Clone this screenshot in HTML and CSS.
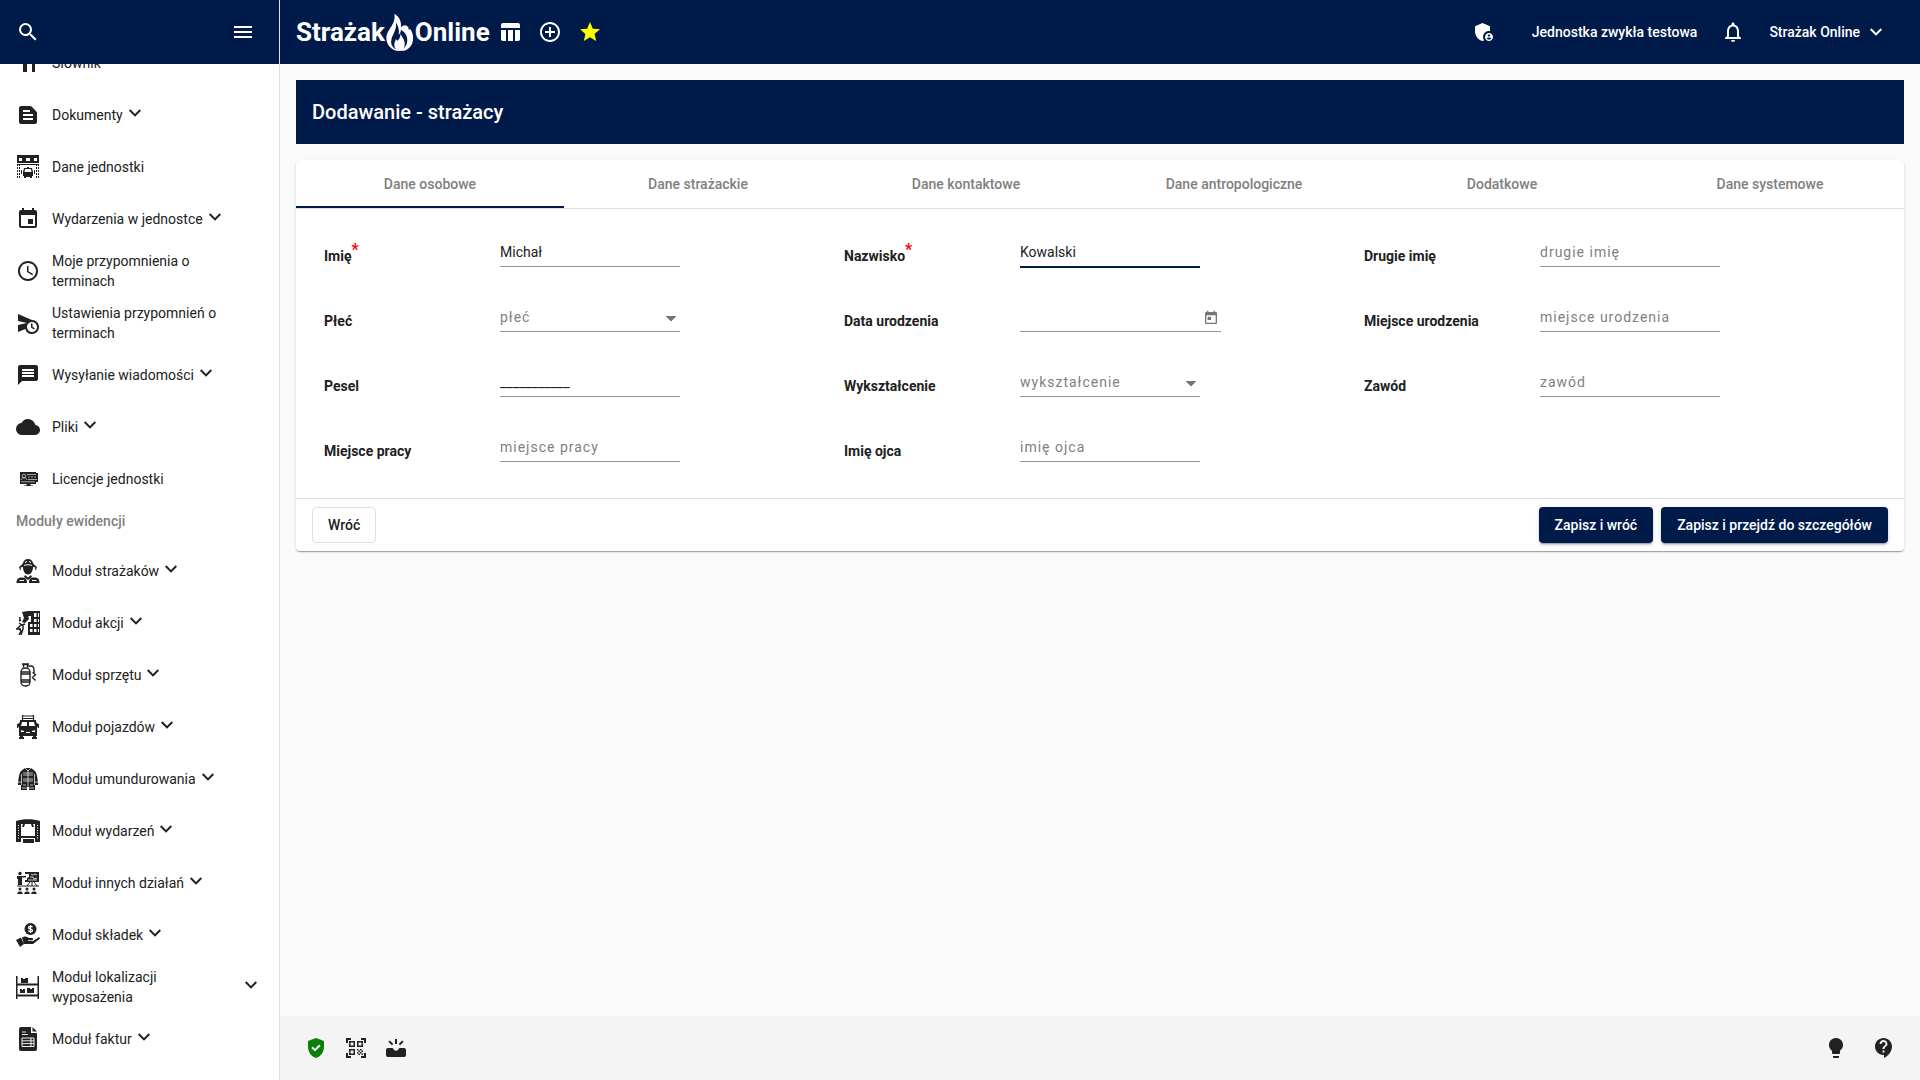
FILE: index.html
```html
<!DOCTYPE html>
<html lang="pl">
<head>
    <meta charset="UTF-8">
    <meta name="viewport" content="width=device-width, initial-scale=1.0">
    <title>Strażak Online - Dodawanie strażaka</title>
    <link rel="stylesheet" href="styles.css">
</head>
<body>
    <!-- Wspólna ikona strzałki -->
    <svg class="sprite" aria-hidden="true">
        <symbol id="chevron" viewBox="0 0 24 24"><path d="M7.4 8.3 12 12.9l4.6-4.6L18 9.7l-6 6-6-6z"/></symbol>
    </svg>

    <!-- Menu boczne -->
    <aside class="sidebar">
        <div class="sidebar-top">
            <button class="icon-btn" aria-label="Szukaj"><svg class="icon" viewBox="0 0 24 24"><path d="M15.5 14h-.79l-.28-.27A6.471 6.471 0 0 0 16 9.5 6.5 6.5 0 1 0 9.5 16c1.61 0 3.09-.59 4.23-1.57l.27.28v.79l5 4.99L20.49 19l-4.99-5zm-6 0C7.01 14 5 11.99 5 9.5S7.01 5 9.5 5 14 7.01 14 9.5 11.99 14 9.5 14z"/></svg></button>
            <button class="icon-btn" aria-label="Menu"><svg class="icon" viewBox="0 0 24 24"><path d="M3 18h18v-2H3v2zm0-5h18v-2H3v2zm0-7v2h18V6H3z"/></svg></button>
        </div>
        <nav class="nav">
            <ul class="nav-list nav-list-scrolled">
                <li><a href="#" class="nav-item">
                    <svg class="icon" viewBox="0 0 24 24"><path d="M5 4h14v3H5zM7 9c0-1 1-2 2-2h8c1 0 2 1 2 2v12h-3V11h-5v10H7z"/></svg>
                    <span>Słownik</span></a></li>
                <li><a href="#" class="nav-item">
                    <svg class="icon" viewBox="0 0 24 24"><path d="M20.41 8.41l-4.83-4.83c-.37-.37-.88-.58-1.41-.58H5c-1.1 0-2 .9-2 2v14c0 1.1.9 2 2 2h14c1.1 0 2-.9 2-2V9.83c0-.53-.21-1.04-.59-1.42zM7 7h7v2H7V7zm10 10H7v-2h10v2zm0-4H7v-2h10v2z"/></svg>
                    <span>Dokumenty</span><svg class="icon chevron"><use href="#chevron"/></svg></a></li>
                <li><a href="#" class="nav-item">
                    <svg class="icon" viewBox="0 0 24 24"><path fill-rule="evenodd" d="M1 0h22v8H1zM3 3v3h3V3zm7 0v3h4V3zm8 0v3h3V3z"/><path d="M1 9h22v1H1z"/><path fill-rule="evenodd" d="M8 13h3v-1h2v1h3l1 4v4h-1v2h-2v-1h-4v1H8v-2H7v-4zm1 1-.5 3h7l-.5-3zM5 15h1v4H5zm13 0h1v4h-1z"/><path fill="none" stroke="currentColor" stroke-dasharray="2 1" d="M1.5 9v15M3.5 9v15M20.5 9v15M22.5 9v15"/></svg>
                    <span>Dane jednostki</span></a></li>
                <li><a href="#" class="nav-item">
                    <svg class="icon" viewBox="0 0 24 24"><path d="M17 12h-5v5h5v-5zM16 1v2H8V1H6v2H5c-1.11 0-1.99.9-1.99 2L3 19a2 2 0 0 0 2 2h14c1.1 0 2-.9 2-2V5c0-1.1-.9-2-2-2h-1V1h-2zm3 18H5V8h14v11z"/></svg>
                    <span>Wydarzenia w jednostce</span><svg class="icon chevron"><use href="#chevron"/></svg></a></li>
                <li><a href="#" class="nav-item">
                    <svg class="icon" viewBox="0 0 24 24"><path d="M11.99 2C6.47 2 2 6.48 2 12s4.47 10 9.99 10C17.52 22 22 17.52 22 12S17.52 2 11.99 2zM12 20c-4.42 0-8-3.58-8-8s3.58-8 8-8 8 3.58 8 8-3.58 8-8 8zm.5-13H11v6l5.25 3.15.75-1.23-4.5-2.67z"/></svg>
                    <span>Moje przypomnienia o terminach</span></a></li>
                <li><a href="#" class="nav-item">
                    <svg class="icon" viewBox="0 0 24 24"><path d="M16.5 12.5H15v4l3 2 .75-1.23-2.25-1.52zM16 9 2 3v7l9 2-9 2v7l7.27-3.11C10.09 20.83 12.79 23 16 23c3.86 0 7-3.14 7-7s-3.14-7-7-7zm0 12c-2.76 0-5-2.24-5-5s2.24-5 5-5 5 2.24 5 5-2.24 5-5 5z"/></svg>
                    <span>Ustawienia przypomnień o terminach</span></a></li>
                <li><a href="#" class="nav-item">
                    <svg class="icon" viewBox="0 0 24 24"><path d="M20 2H4c-1.1 0-1.99.9-1.99 2L2 22l4-4h14c1.1 0 2-.9 2-2V4c0-1.1-.9-2-2-2zm-2 12H6v-2h12v2zm0-3H6V9h12v2zm0-3H6V6h12v2z"/></svg>
                    <span>Wysyłanie wiadomości</span><svg class="icon chevron"><use href="#chevron"/></svg></a></li>
                <li><a href="#" class="nav-item">
                    <svg class="icon" viewBox="0 0 24 24"><path d="M19.35 10.04A7.49 7.49 0 0 0 12 4C9.11 4 6.6 5.64 5.35 8.04A5.994 5.994 0 0 0 0 14c0 3.31 2.69 6 6 6h13c2.76 0 5-2.24 5-5 0-2.64-2.05-4.78-4.65-4.96z"/></svg>
                    <span>Pliki</span><svg class="icon chevron"><use href="#chevron"/></svg></a></li>
                <li><a href="#" class="nav-item">
                    <svg class="icon" viewBox="0 0 24 24"><path d="M4 5h16v1h2v9h-2v2h-6l1 1.5h2V19H8v-.5h2l1-1.5H4z"/><g fill="none" stroke="#fff" stroke-width=".6"><circle cx="8" cy="9" r="1.8"/><path d="M5 13c1-3 5-3 6 0M11 7.5h9M12 10h2m1 0h2m1 0h2M5 14.8h14M12 12.5h9"/></g></svg>
                    <span>Licencje jednostki</span></a></li>
            </ul>
            <h2 class="nav-heading">Moduły ewidencji</h2>
            <ul class="nav-list">
                <li><a href="#" class="nav-item">
                    <svg class="icon" viewBox="0 0 24 24"><path d="M12 0c3 0 4.5 2 5 4l1 1.5 3 2.5-1 3h-1l.5-2.5L17 8c0 4-2 7.5-5 7.5S7 12 7 8l-2.500.5L5 11H4L3 8l3-2.500L7 4c.5-2 2-4 5-4z"/><path fill="none" stroke="#fff" d="M8 6.500c2-1 6-1 8 0M9.500 4l1-2M14.500 4l-1-2"/><path d="M9 16l3 2.500L15 16l1 2-4 3-4-3z"/><path fill-rule="evenodd" d="M.5 24c0-4 2-5.500 5-5.500 4 0 5.500 1.500 5.500 5.500zM3 22h5v-1H4zM13 24c0-4 1.500-5.500 5-5.500 4 0 5.500 1.500 5.500 5.500zm3-2h5l-1-1h-4z"/></svg>
                    <span>Moduł strażaków</span><svg class="icon chevron"><use href="#chevron"/></svg></a></li>
                <li><a href="#" class="nav-item">
                    <svg class="icon" viewBox="0 0 24 24"><path fill-rule="evenodd" d="M12 11h3V5h-3V0h12v24H12zm2 2v3h2.5v-3zm4 0v3h2.5v-3zm0-5v3h2.5V8zm0-6v4h2.5V2zm4 0v4h1V2zm0 6v3h1V8zm0 5v3h1v-3zm-8 5v3h2.5v-3zm4 0v3h2.5v-3zm4 0v3h1v-3z"/><path d="M6 1l6-1 3 3-3 1 1 4-4 4-3-1 2-4-1-3z"/><path fill="none" stroke="currentColor" stroke-width="1.5" d="M3 10l2-1M3 12l3 2 3-1M5 14l-3 3 3 3-2 4M7 13v5l-2 6M0 18h5M4 6v3"/></svg>
                    <span>Moduł akcji</span><svg class="icon chevron"><use href="#chevron"/></svg></a></li>
                <li><a href="#" class="nav-item">
                    <svg class="icon" viewBox="0 0 24 24"><g fill="none" stroke="currentColor" stroke-width="1.4"><rect x="5" y="5" width="9" height="18" rx="4"/><path d="M5 9h9M5 11h9M5 17h9M5 19h9M7.5 4.5v-3h4v3M6 1h7M12 3h3c2 0 3 2 3 4v3M16.5 9.5l3 2-3 3 3 3"/></g></svg>
                    <span>Moduł sprzętu</span><svg class="icon chevron"><use href="#chevron"/></svg></a></li>
                <li><a href="#" class="nav-item">
                    <svg class="icon" viewBox="0 0 24 24"><path fill="none" stroke="currentColor" stroke-width="1.2" d="M6.5 0v5M17.5 0v5M6.5 1h11M6.5 3.5h11"/><path fill-rule="evenodd" d="M4 5h16v2l2 2h1v4h-1l-1-2v10h-1v1h1v2h-5v-2h1v-1H7v1h1v2H3v-2h1v-1H3V11l-1 2H1V9h1l2-2zm2 2-1 4h6V7zm7 0v4h6l-1-4zm-8 8v2h3v-1zm14 0-3 1v1h3zm-9 2v1h4v-1z"/></svg>
                    <span>Moduł pojazdów</span><svg class="icon chevron"><use href="#chevron"/></svg></a></li>
                <li><a href="#" class="nav-item">
                    <svg class="icon" viewBox="0 0 24 24"><path d="M9 1h6l4 3c2 3 3 8 3 14h-3v5h-6v-3h-2v3H5v-5H2C2 12 3 7 5 4z"/><path fill="none" stroke="#fff" stroke-width=".7" d="M12 3v17M7 6h10M7 8h10M7 12h10M7 14h10M5.5 7v11M18.5 7v11M2 15h3M19 15h3M7 18h3M14 18h3M6 21h5M13 21h5M9 1l3 3 3-3"/></svg>
                    <span>Moduł umundurowania</span><svg class="icon chevron"><use href="#chevron"/></svg></a></li>
                <li><a href="#" class="nav-item">
                    <svg class="icon" viewBox="0 0 24 24"><path fill-rule="evenodd" d="M0 2C7-.5 17-.5 24 2v21h-5v-4h-1v5H7v-5H5v4H0zm5 3v12h14V5h-2l1 3h-2l-1-3H9L8 8H6l1-3z"/><path fill="none" stroke="#fff" stroke-dasharray="1 1.5" d="M2.500 6v14M21.500 6v14"/><path stroke="#fff" d="M7 19.500h11"/></svg>
                    <span>Moduł wydarzeń</span><svg class="icon chevron"><use href="#chevron"/></svg></a></li>
                <li><a href="#" class="nav-item">
                    <svg class="icon" viewBox="0 0 24 24"><circle cx="4" cy="2.5" r="1.7"/><path d="M1 5h9v1.5H6V14H2V8H1zM9 1h14v10H9V9h2V7l2-1V3H9z"/><path fill="none" stroke="#fff" stroke-width=".8" d="M15 3l2 1 2-1 2 1M14 6h3l1 2 3-1M12 9h9"/><path fill="none" stroke="currentColor" d="M1 15h22M14 11l-3 4M18 11l3 4M16 11v4"/><circle cx="4" cy="18" r="1.5"/><circle cx="11" cy="18" r="1.5"/><circle cx="18" cy="18" r="1.5"/><path d="M1 23l1-2 1.5-.5h2L7 23zM8 23l1-2 1.5-.5h2L14 23zM15 23l1-2 1.5-.5h2L21 23z"/></svg>
                    <span>Moduł innych działań</span><svg class="icon chevron"><use href="#chevron"/></svg></a></li>
                <li><a href="#" class="nav-item">
                    <svg class="icon" viewBox="0 0 24 24"><circle cx="14.5" cy="6" r="6"/><path fill="none" stroke="#fff" stroke-width="1.3" d="M16.5 4.2c-1-1.2-4-1-4 .5 0 1.8 4 .9 4 2.7 0 1.600-3 1.800-4.200.3M14.500 2v8"/><path d="M0 17l5-2.500L8 21l-4 3zM6 14.500c3-2 5-1 7 .5h3c1.500 0 1.500 2 0 2.300h-4v.7h5l5.500-3.500c1.200-.5 2 .5 1 1.500L17 21H8z"/></svg>
                    <span>Moduł składek</span><svg class="icon chevron"><use href="#chevron"/></svg></a></li>
                <li><a href="#" class="nav-item">
                    <svg class="icon" viewBox="0 0 24 24"><path d="M0 1h1.500v7.500h20V1H23v23h-1.500v-2.500h-20V24H0zm1.500 9.500v9h20v-9z" fill-rule="evenodd"/><path d="M5 3h2v1h2V3h3v5H5zM4 14h2v1h1v-1h2v4H4zM11 13h3v1h2v-1h2v5h-7z"/></svg>
                    <span>Moduł lokalizacji wyposażenia</span><svg class="icon chevron"><use href="#chevron"/></svg></a></li>
                <li><a href="#" class="nav-item">
                    <svg class="icon" viewBox="0 0 24 24"><path d="M5 0h10v6h6v16a2 2 0 0 1-2 2H5a2 2 0 0 1-2-2V2a2 2 0 0 1 2-2zM16.5 0 21 4.500h-4.500z"/><path fill="none" stroke="#fff" stroke-width=".9" d="M6 5h4M6 7.5h6M6 11h12v8.5H6zM6 13.8h12M6 16.6h12M15 11v8.5"/></svg>
                    <span>Moduł faktur</span><svg class="icon chevron"><use href="#chevron"/></svg></a></li>
            </ul>
        </nav>
    </aside>

    <div class="page">
        <!-- Górny pasek -->
        <header class="topbar">
            <a href="#" class="logo">
                <span>Strażak</span>
                <svg class="flame" viewBox="20 12 88 120"><path fill="#fff" d="M46 14C62 23 69 38 67 57c7-8 17-9 24 1-1 6 1 8 6 5 6 9 10 21 8 35-2 16-12 28-27 33H51C33 124 21 111 21 91c0-28 32-42 25-77z"/><path fill="#001a4a" d="M51 41c7 11 12 25 9 40 4-4 7-10 7-16 12 7 20 18 20 32 0 13-5 23-16 29H48c-11-9-14-19-11-31 4-17 18-31 14-54z"/><path fill="#fff" d="M66 76c2 11 13 17 13 33 0 13-6 20-17 22-11-2-16-9-16-19 0-8 4-12 5-18 2 3 3 5 5 6 7-6 10-14 10-24z"/></svg>
                <span>Online</span>
            </a>
            <div class="shortcuts">
                <button class="icon-btn" aria-label="Tabela"><svg class="icon" viewBox="0 0 24 24"><path d="M10 10.02h5V21h-5zM17 21h3c1.1 0 2-.9 2-2v-9h-5zm3-18H5c-1.1 0-2 .9-2 2v3h19V5c0-1.1-.9-2-2-2zM3 19c0 1.1.9 2 2 2h3V10H3z"/></svg></button>
                <button class="icon-btn" aria-label="Dodaj"><svg class="icon" viewBox="0 0 24 24"><path d="M13 7h-2v4H7v2h4v4h2v-4h4v-2h-4V7zm-1-5C6.48 2 2 6.48 2 12s4.48 10 10 10 10-4.48 10-10S17.52 2 12 2zm0 18c-4.41 0-8-3.59-8-8s3.59-8 8-8 8 3.59 8 8-3.59 8-8 8z"/></svg></button>
                <button class="icon-btn star" aria-label="Ulubione"><svg class="icon" viewBox="0 0 24 24"><path d="M12 17.27 18.18 21l-1.64-7.03L22 9.24l-7.19-.61L12 2 9.19 8.63 2 9.24l5.46 4.73L5.82 21z"/></svg></button>
            </div>
            <div class="account">
                <button class="icon-btn admin" aria-label="Administracja"><svg class="icon" viewBox="0 0 24 24"><path d="M17 11c.34 0 .67.04 1 .09V6.27L10.5 3 3 6.27v4.91c0 4.54 3.2 8.79 7.5 9.82.55-.13 1.08-.32 1.6-.55-.69-.98-1.1-2.17-1.1-3.45 0-3.31 2.69-6 6-6z"/><path d="M17 13c-2.21 0-4 1.79-4 4s1.79 4 4 4 4-1.79 4-4-1.79-4-4-4zm0 1.38c.62 0 1.12.51 1.12 1.12s-.51 1.12-1.12 1.12-1.12-.51-1.12-1.12.5-1.12 1.12-1.12zm0 5.37c-.93 0-1.74-.46-2.24-1.17.05-.72 1.51-1.08 2.24-1.08s2.19.36 2.24 1.08c-.5.71-1.31 1.17-2.24 1.17z"/></svg></button>
                <span>Jednostka zwykła testowa</span>
                <button class="icon-btn" aria-label="Powiadomienia"><svg class="icon" viewBox="0 0 24 24"><path d="M12 22c1.1 0 2-.9 2-2h-4c0 1.1.9 2 2 2zm6-6v-5c0-3.07-1.63-5.64-4.5-6.32V4c0-.83-.67-1.5-1.5-1.5s-1.5.67-1.5 1.5v.68C7.64 5.36 6 7.92 6 11v5l-2 2v1h16v-1l-2-2zm-2 1H8v-6c0-2.48 1.51-4.5 4-4.5s4 2.02 4 4.5v6z"/></svg></button>
                <button class="user">Strażak Online <svg class="icon"><use href="#chevron"/></svg></button>
            </div>
        </header>

        <main class="content">
            <h1>Dodawanie - strażacy</h1>

            <form class="card">
                <nav class="tabs">
                    <a href="#" class="active">Dane osobowe</a>
                    <a href="#">Dane strażackie</a>
                    <a href="#">Dane kontaktowe</a>
                    <a href="#">Dane antropologiczne</a>
                    <a href="#">Dodatkowe</a>
                    <a href="#">Dane systemowe</a>
                </nav>

                <div class="fields">
                    <div class="field">
                        <label for="imie">Imię<sup>*</sup></label>
                        <input type="text" id="imie" value="Michał">
                    </div>
                    <div class="field">
                        <label for="nazwisko">Nazwisko<sup>*</sup></label>
                        <input type="text" id="nazwisko" class="focused" value="Kowalski">
                    </div>
                    <div class="field">
                        <label for="drugieImie">Drugie imię</label>
                        <input type="text" id="drugieImie" placeholder="drugie imię">
                    </div>
                    <div class="field">
                        <label for="plec">Płeć</label>
                        <select id="plec">
                            <option value="">płeć</option>
                            <option>kobieta</option>
                            <option>mężczyzna</option>
                        </select>
                    </div>
                    <div class="field">
                        <label for="dataUrodzenia">Data urodzenia</label>
                        <div class="date-box">
                            <input type="text" id="dataUrodzenia">
                            <button type="button" class="icon-btn" aria-label="Wybierz datę"><svg viewBox="0 0 24 24"><path d="M19 3h-1V1h-2v2H8V1H6v2H5c-1.11 0-1.99.9-1.99 2L3 19c0 1.1.89 2 2 2h14c1.1 0 2-.9 2-2V5c0-1.1-.9-2-2-2zm0 16H5V8h14v11zM7 10h5v5H7z"/></svg></button>
                        </div>
                    </div>
                    <div class="field">
                        <label for="miejsceUrodzenia">Miejsce urodzenia</label>
                        <input type="text" id="miejsceUrodzenia" placeholder="miejsce urodzenia">
                    </div>
                    <div class="field">
                        <label for="pesel">Pesel</label>
                        <input type="text" id="pesel" value="___________">
                    </div>
                    <div class="field">
                        <label for="wyksztalcenie">Wykształcenie</label>
                        <select id="wyksztalcenie">
                            <option value="">wykształcenie</option>
                            <option>podstawowe</option>
                            <option>średnie</option>
                            <option>wyższe</option>
                        </select>
                    </div>
                    <div class="field">
                        <label for="zawod">Zawód</label>
                        <input type="text" id="zawod" placeholder="zawód">
                    </div>
                    <div class="field">
                        <label for="miejscePracy">Miejsce pracy</label>
                        <input type="text" id="miejscePracy" placeholder="miejsce pracy">
                    </div>
                    <div class="field">
                        <label for="imieOjca">Imię ojca</label>
                        <input type="text" id="imieOjca" placeholder="imię ojca">
                    </div>
                </div>

                <!-- Przyciski -->
                <div class="actions">
                    <button type="button" class="btn btn-back">Wróć</button>
                    <button type="button" class="btn btn-primary">Zapisz i wróć</button>
                    <button type="button" class="btn btn-primary">Zapisz i przejdź do szczegółów</button>
                </div>
            </form>
        </main>

        <footer class="bottombar">
            <button class="icon-btn shield" aria-label="Status"><svg class="icon" viewBox="0 0 24 24"><path d="M12 2 4 5v6.09c0 5.05 3.41 9.76 8 10.91 4.59-1.15 8-5.86 8-10.91V5zm-1.06 13.54L7.4 12l1.41-1.41 2.12 2.12 4.24-4.24 1.41 1.41z"/></svg></button>
            <button class="icon-btn" aria-label="Skanuj kod"><svg class="icon" viewBox="0 0 24 24"><path d="M9.5 6.5v3h-3v-3h3M11 5H5v6h6V5zm-1.5 9.5v3h-3v-3h3M11 13H5v6h6v-6zm6.5-6.5v3h-3v-3h3M19 5h-6v6h6V5zm-6 8h1.5v1.5H13V13zm1.5 1.5H16V16h-1.5v-1.5zM16 13h1.5v1.5H16V13zm-3 3h1.5v1.5H13V16zm1.5 1.5H16V19h-1.5v-1.5zM16 16h1.5v1.5H16V16zm1.5-1.5H19V16h-1.5v-1.5zm0 3H19V19h-1.5v-1.5zM22 7h-2V4h-3V2h5v5zm0 15v-5h-2v3h-3v2h5zM2 22h5v-2H4v-3H2v5zM2 2v5h2V4h3V2H2z"/></svg></button>
            <button class="icon-btn" aria-label="Nowości"><svg class="icon" viewBox="0 0 24 24"><path d="M4 12h4c.8 0 1 .4 1.3 1a3 3 0 0 0 5.4 0c.3-.6.5-1 1.3-1h4a2 2 0 0 1 2 2v5a2 2 0 0 1-2 2H4a2 2 0 0 1-2-2v-5c0-1.1.9-2 2-2zM11 3h2v5h-2zM4.4 5.8l1.4-1.4 3.5 3.5-1.4 1.4zM18.2 4.4l1.4 1.4-3.5 3.5-1.4-1.4z"/></svg></button>
            <button class="icon-btn hint" aria-label="Podpowiedzi"><svg class="icon" viewBox="0 0 24 24"><path d="M9 21c0 .5.4 1 1 1h4c.6 0 1-.5 1-1v-1H9v1zm3-19C8.1 2 5 5.1 5 9c0 2.4 1.2 4.5 3 5.7V17c0 .5.4 1 1 1h6c.6 0 1-.5 1-1v-2.3c1.8-1.3 3-3.4 3-5.7 0-3.9-3.1-7-7-7z"/></svg></button>
            <button class="icon-btn" aria-label="Pomoc"><svg class="icon" viewBox="0 0 24 24"><path d="M11.5 2C6.81 2 3 5.81 3 10.5S6.81 19 11.5 19h.5v3c4.86-2.34 8-7 8-11.5C20 5.81 16.19 2 11.5 2zm1 14.5h-2v-2h2v2zm0-3.5h-2c0-3.25 3-3 3-5 0-1.1-.9-2-2-2s-2 .9-2 2h-2c0-2.21 1.79-4 4-4s4 1.79 4 4c0 2.5-3 2.75-3 5z"/></svg></button>
        </footer>
    </div>
</body>
</html>
```

FILE: styles.css
```css
* {
    box-sizing: border-box;
}
body {
    margin: 0;
    height: 100vh;
    display: flex;
    background-color: #fafafa;
    color: #212121;
    font-family: Roboto, "Noto Sans", sans-serif;
    font-size: 14px;
    line-height: 20px;
    overflow: hidden;
}
a {
    color: inherit;
    text-decoration: none;
}
button, input, select {
    font: inherit;
    color: inherit;
}
svg {
    fill: currentColor;
}
.sprite {
    display: none;
}
.icon {
    width: 24px;
    height: 24px;
    flex-shrink: 0;
}
.icon-btn {
    display: flex;
    padding: 0;
    border: none;
    background: none;
}

/* Menu boczne */
.sidebar {
    width: 280px;
    flex-shrink: 0;
    display: flex;
    flex-direction: column;
    border-right: 1px solid #e0e0e0;
    background-color: #fff;
}
.sidebar-top {
    height: 64px;
    flex-shrink: 0;
    display: flex;
    align-items: center;
    justify-content: space-between;
    padding: 0 24px 0 16px;
    background-color: #001a4a;
    color: #fff;
}
.nav {
    flex: 1;
    min-height: 0;
    overflow: hidden;
}
.nav-list {
    margin: 0;
    padding: 0;
    list-style: none;
}
.nav-list-scrolled {
    margin-top: -27px;
}
.nav-item {
    height: 52px;
    display: flex;
    align-items: center;
    padding: 0 16px;
}
.nav-item span {
    max-width: 200px;
    margin-left: 12px;
}
.chevron {
    margin-bottom: 4px;
}
.nav-heading {
    margin: 0;
    padding: 6px 16px 14px;
    font-size: 14px;
    font-weight: 500;
    color: #808080;
}

/* Górny pasek */
.page {
    flex: 1;
    min-width: 0;
    display: flex;
    flex-direction: column;
}
.topbar {
    height: 64px;
    flex-shrink: 0;
    display: flex;
    align-items: center;
    padding: 0 32px 0 16px;
    background-color: #001a4a;
    color: #fff;
    font-weight: 500;
}
.logo {
    display: flex;
    align-items: center;
    font-size: 26px;
    font-weight: 700;
    line-height: 38px;
}
.flame {
    width: 28px;
    height: 38px;
    margin: 0 1px;
}
.shortcuts {
    display: flex;
    gap: 16px;
    margin-left: 8px;
}
.star {
    color: #ff0;
}
.account {
    display: flex;
    align-items: center;
    gap: 24px;
    margin-left: auto;
}
.admin {
    margin-right: 12px;
}
.user {
    display: flex;
    align-items: center;
    gap: 4px;
    padding: 0;
    border: none;
    background: none;
}

/* Treść */
.content {
    flex: 1;
    padding: 16px;
}
h1 {
    margin: 0 0 16px;
    padding: 16px;
    background-color: #001a4a;
    color: #fff;
    font-size: 20px;
    font-weight: 500;
    line-height: 32px;
}
.card {
    border-radius: 4px;
    background-color: #fff;
    box-shadow: 0 2px 1px -1px rgba(0, 0, 0, 0.2), 0 1px 1px rgba(0, 0, 0, 0.14), 0 1px 3px rgba(0, 0, 0, 0.12);
}
.tabs {
    display: flex;
    border-bottom: 1px solid #e0e0e0;
}
.tabs a {
    flex: 1;
    height: 48px;
    line-height: 48px;
    text-align: center;
    font-weight: 500;
    color: #808080;
}
.tabs .active {
    border-bottom: 2px solid #001a4a;
}
.fields {
    display: grid;
    grid-template-columns: repeat(3, 1fr);
    padding: 14px 24px 15px;
}
.field {
    height: 65px;
    display: flex;
    align-items: center;
    padding: 0 4px;
}
.field label {
    width: 176px;
    font-weight: 700;
}
.field sup {
    color: #f00;
    font-size: 16px;
    line-height: 0;
}
.field input, .field select {
    width: 180px;
    height: 27px;
    margin: 0 0 4px;
    padding: 0 0 2px;
    border: none;
    border-bottom: 1px solid #949494;
    border-radius: 0;
    outline: none;
    background: none;
}
.field input::placeholder {
    color: #808080;
    letter-spacing: 1px;
}
.field .focused {
    border-color: #001a4a;
    box-shadow: 0 1px #001a4a;
}
.field select {
    appearance: none;
    color: #808080;
    letter-spacing: 1px;
    background: linear-gradient(to bottom right, #757575 50%, transparent 51%) 171px 11px / 5px 5px no-repeat,
        linear-gradient(to bottom left, #757575 50%, transparent 51%) 166px 11px / 5px 5px no-repeat;
}
.date-box {
    display: flex;
    align-items: center;
    width: 201px;
    height: 27px;
    margin-bottom: 4px;
    border-bottom: 1px solid #949494;
}
.date-box input {
    flex: 1;
    min-width: 0;
    margin: 0;
    border: none;
}
.date-box svg {
    width: 16px;
    height: 16px;
    margin-right: 2px;
    color: #757575;
}
.actions {
    display: flex;
    gap: 8px;
    padding: 8px 16px;
    border-top: 1px solid #e0e0e0;
}
.btn {
    height: 36px;
    padding: 0 16px;
    border: none;
    border-radius: 4px;
    font-weight: 500;
}
.btn-back {
    margin-right: auto;
    padding: 0 15px;
    border: 1px solid #e0e0e0;
    background-color: #fff;
}
.btn-primary {
    background-color: #001a4a;
    color: #fff;
    box-shadow: 0 3px 1px -2px rgba(0, 0, 0, 0.2), 0 2px 2px rgba(0, 0, 0, 0.14), 0 1px 5px rgba(0, 0, 0, 0.12);
}

/* Dolny pasek */
.bottombar {
    height: 64px;
    flex-shrink: 0;
    display: flex;
    align-items: center;
    gap: 16px;
    padding: 0 24px;
    background-color: #f4f4f4;
}
.bottombar .shield {
    color: #0a7f0a;
}
.bottombar .hint {
    margin-left: auto;
    margin-right: 8px;
}
```
